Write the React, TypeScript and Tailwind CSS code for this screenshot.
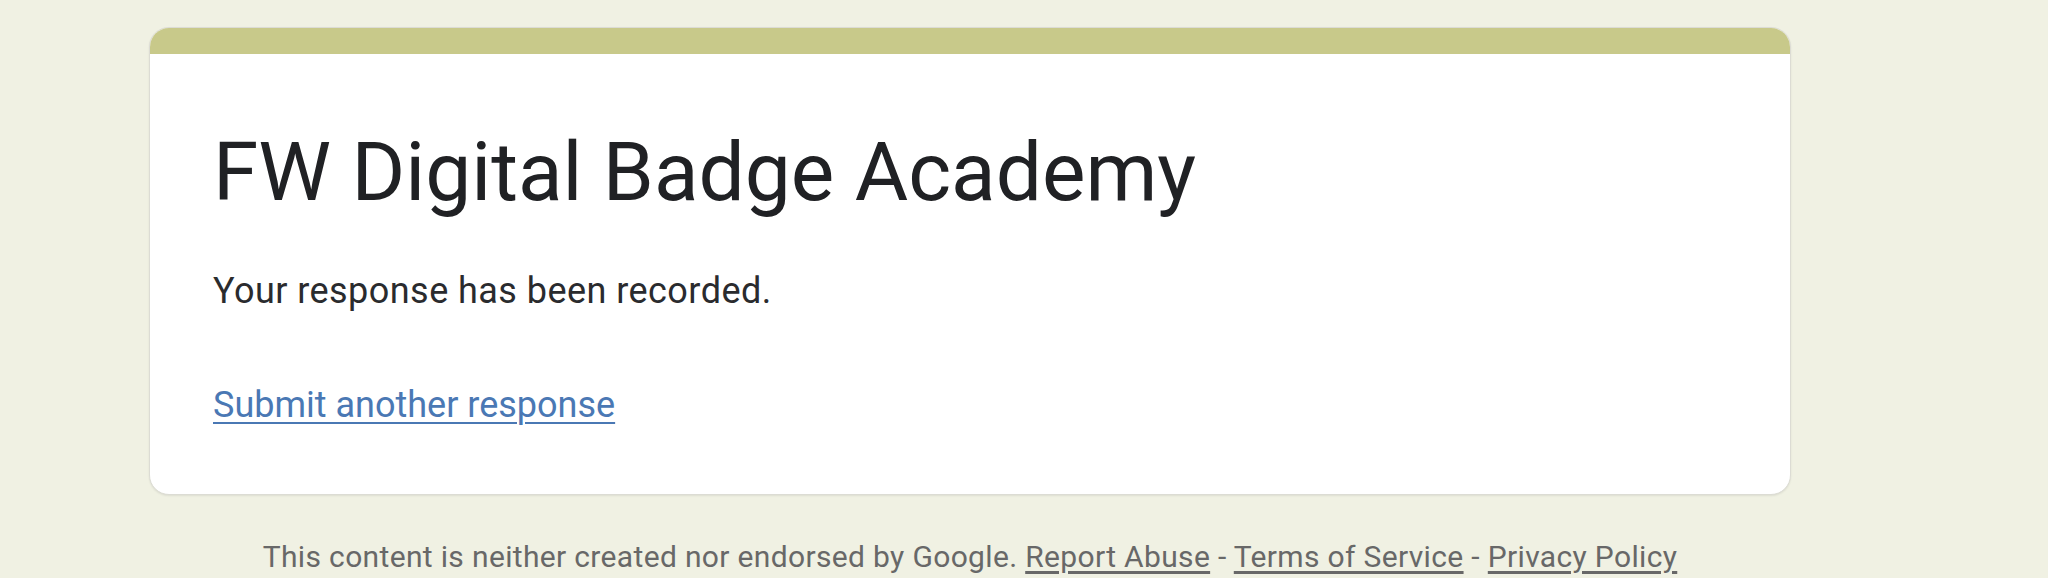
export default function App() {
  return (
    <div className="min-h-[578px] w-full bg-[#f0f1e3] pt-[27px] font-['Roboto',sans-serif]">
      <div className="ml-[149px] w-[1642px]">
        <div className="overflow-hidden rounded-[20px] border border-[#dcdcd4] bg-white shadow-[0_1px_2px_rgba(0,0,0,0.08)]">
          <div className="h-[26px] bg-[#c8c98a]" />
          <div className="px-[63px] pt-[70px] pb-[68px]">
            <h1 className="text-[82px] leading-[96px] font-normal text-[#202124]">
              FW Digital Badge Academy
            </h1>
            <p className="mt-[50px] text-[36px] leading-[42px] tracking-[0.45px] text-[#2a2b2e]">
              Your response has been recorded.
            </p>
            <a
              href="#"
              className="mt-[72px] block w-fit text-[36px] leading-[42px] text-[#4a78b4] underline decoration-[2px] underline-offset-[5px]"
            >
              Submit another response
            </a>
          </div>
        </div>
        <div className="mt-[44px] text-center text-[30px] leading-[35px] tracking-[0.34px] text-[#686868]">
          This content is neither created nor endorsed by Google.{" "}
          <a href="#" className="underline underline-offset-[4px]">
            Report Abuse
          </a>{" "}
          -{" "}
          <a href="#" className="underline underline-offset-[4px]">
            Terms of Service
          </a>{" "}
          -{" "}
          <a href="#" className="underline underline-offset-[4px]">
            Privacy Policy
          </a>
        </div>
      </div>
    </div>
  );
}
